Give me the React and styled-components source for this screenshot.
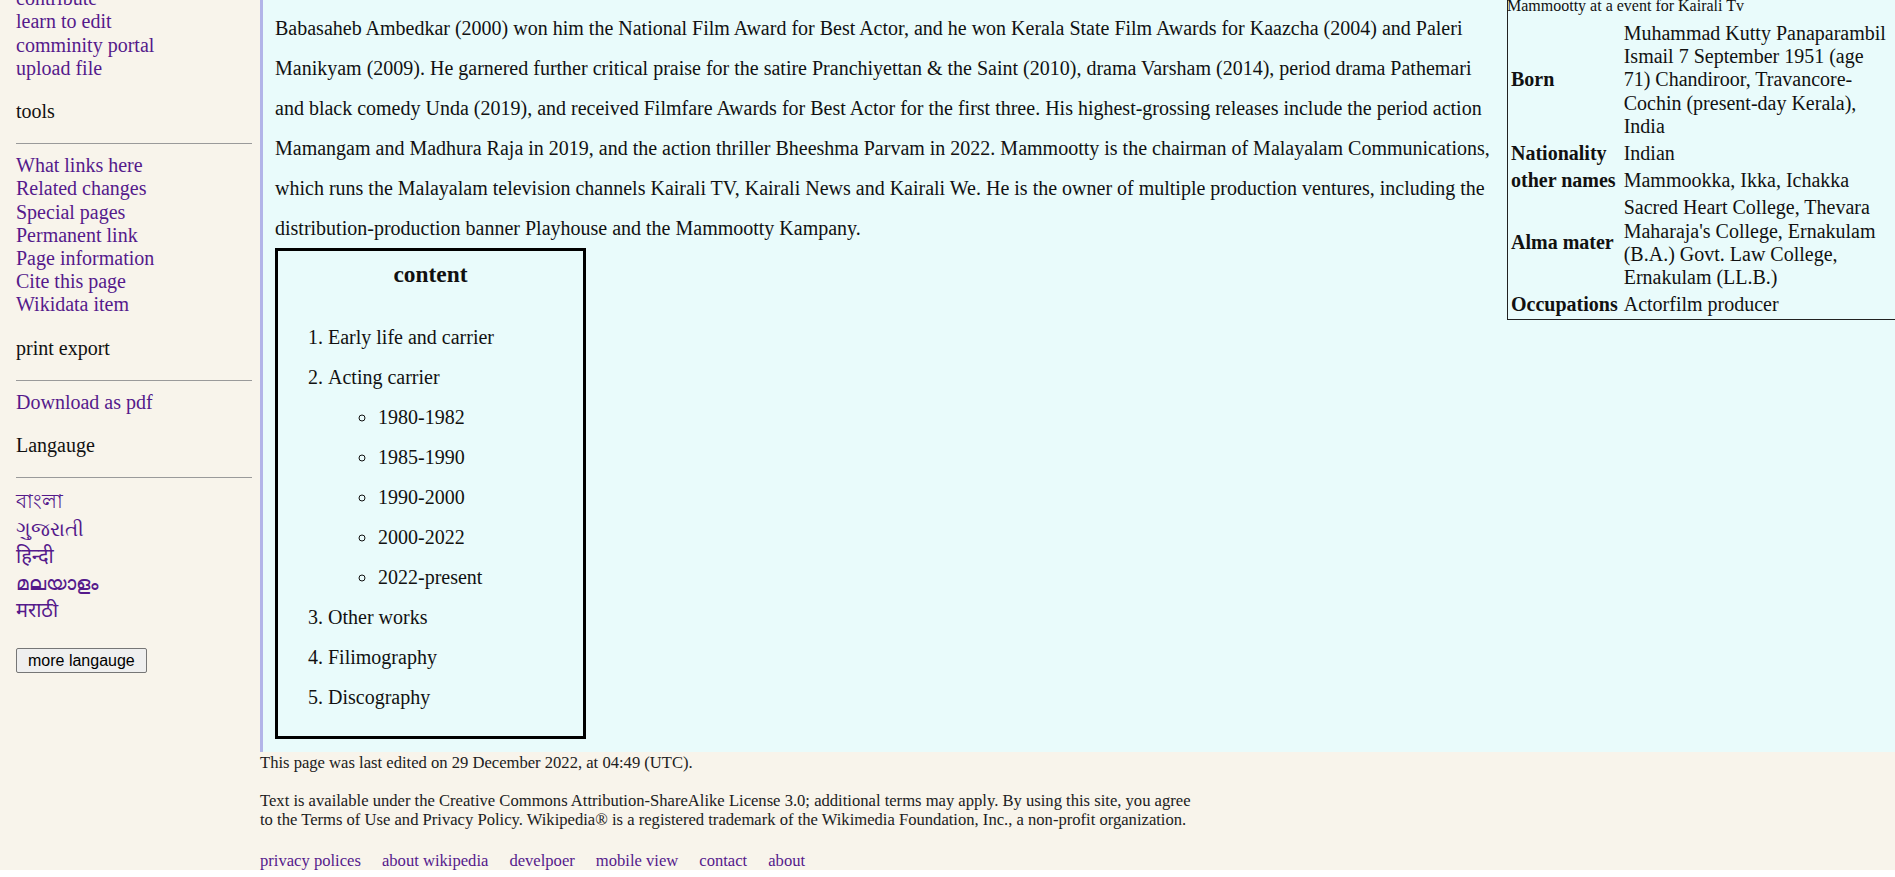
import React from 'react';
import styled, { createGlobalStyle } from 'styled-components';

const GlobalStyle = createGlobalStyle`
  html, body {
    margin: 0;
    padding: 0;
    background: #ffffff;
    overflow: hidden;
  }
  body {
    font-family: "Liberation Serif", "Times New Roman", "Noto Sans", serif;
    color: #111;
  }
`;

const navLinks = ['contribute', 'learn to edit', 'comminity portal', 'upload file'];
const toolLinks = [
  'What links here',
  'Related changes',
  'Special pages',
  'Permanent link',
  'Page information',
  'Cite this page',
  'Wikidata item',
];
const languages = ['বাংলা', 'ગુજરાતી', 'हिन्दी', 'മലയാളം', 'मराठी'];
const footerLinks = ['privacy polices', 'about wikipedia', 'develpoer', 'mobile view', 'contact', 'about'];

const App = () => {
  return (
    <>
      <GlobalStyle />
      <Page>
        <Sidebar>
          <SideList $offset="-12.8px">
            {navLinks.map((l) => (
              <li key={l}>
                <SideLink href="#">{l}</SideLink>
              </li>
            ))}
          </SideList>

          <SideHeading>tools</SideHeading>
          <Rule />
          <SideList>
            {toolLinks.map((l) => (
              <li key={l}>
                <SideLink href="#">{l}</SideLink>
              </li>
            ))}
          </SideList>

          <SideHeading>print export</SideHeading>
          <Rule />
          <SideList>
            <li>
              <SideLink href="#">Download as pdf</SideLink>
            </li>
          </SideList>

          <SideHeading>Langauge</SideHeading>
          <Rule />
          <SideList>
            {languages.map((l) => (
              <li key={l}>
                <SideLink href="#" $lang>
                  {l}
                </SideLink>
              </li>
            ))}
          </SideList>

          <MoreButton type="button">more langauge</MoreButton>
        </Sidebar>

        <Main>
          <Infobox>
            <tbody>
              <tr>
                <Caption colSpan={2}>Mammootty at a event for Kairali Tv</Caption>
              </tr>
              <tr>
                <InfoLabel>Born</InfoLabel>
                <InfoValue>
                  Muhammad Kutty Panaparambil Ismail 7 September 1951 (age 71) Chandiroor,
                  Travancore-Cochin (present-day Kerala), India
                </InfoValue>
              </tr>
              <tr>
                <InfoLabel>Nationality</InfoLabel>
                <InfoValue>Indian</InfoValue>
              </tr>
              <tr>
                <InfoLabel>other names</InfoLabel>
                <InfoValue>Mammookka, Ikka, Ichakka</InfoValue>
              </tr>
              <tr>
                <InfoLabel>Alma mater</InfoLabel>
                <InfoValue>
                  Sacred Heart College, Thevara Maharaja's College, Ernakulam (B.A.) Govt. Law
                  College, Ernakulam (LL.B.)
                </InfoValue>
              </tr>
              <tr>
                <InfoLabel>Occupations</InfoLabel>
                <InfoValue>Actorfilm producer</InfoValue>
              </tr>
            </tbody>
          </Infobox>

          <Paragraph>
            Babasaheb Ambedkar (2000) won him the National Film Award for Best Actor, and he won
            Kerala State Film Awards for Kaazcha (2004) and Paleri Manikyam (2009). He garnered
            further critical praise for the satire Pranchiyettan &amp; the Saint (2010), drama
            Varsham (2014), period drama Pathemari and black comedy Unda (2019), and received
            Filmfare Awards for Best Actor for the first three. His highest-grossing releases
            include the period action Mamangam and Madhura Raja in 2019, and the action thriller
            Bheeshma Parvam in 2022. Mammootty is the chairman of Malayalam Communications, which
            runs the Malayalam television channels Kairali TV, Kairali News and Kairali We. He is
            the owner of multiple production ventures, including the distribution-production
            banner Playhouse and the Mammootty Kampany.
          </Paragraph>

          <TocBox>
            <TocTitle>content</TocTitle>
            <TocList>
              <li>Early life and carrier</li>
              <li>
                Acting carrier
                <SubList>
                  <li>1980-1982</li>
                  <li>1985-1990</li>
                  <li>1990-2000</li>
                  <li>2000-2022</li>
                  <li>2022-present</li>
                </SubList>
              </li>
              <li>Other works</li>
              <li>Filimography</li>
              <li>Discography</li>
            </TocList>
          </TocBox>
        </Main>

        <Footer>
          <FooterText>This page was last edited on 29 December 2022, at 04:49 (UTC).</FooterText>
          <FooterText $gap="18px">
            Text is available under the Creative Commons Attribution-ShareAlike License 3.0;
            additional terms may apply. By using this site, you agree
            <br />
            to the Terms of Use and Privacy Policy. Wikipedia® is a registered trademark of the
            Wikimedia Foundation, Inc., a non-profit organization.
          </FooterText>
          <FooterLinks>
            {footerLinks.map((l) => (
              <FooterLink key={l} href="#">
                {l}
              </FooterLink>
            ))}
          </FooterLinks>
        </Footer>
      </Page>
    </>
  );
};

const Page = styled.div`
  display: grid;
  grid-template-columns: 260px 1fr;
  grid-template-rows: auto 1fr;
  height: 870px;
  background: #f8f4eb;
  overflow: hidden;
`;

const Sidebar = styled.aside`
  grid-column: 1;
  grid-row: 1 / span 2;
  padding: 0 8px 0 16px;
  font-size: 20px;
`;

const SideList = styled.ul`
  list-style: none;
  margin: ${(p) => p.$offset || '0'} 0 0;
  padding: 0;
`;

const SideLink = styled.a`
  display: block;
  color: #551a8b;
  text-decoration: none;
  font-size: 20px;
  line-height: ${(p) => (p.$lang ? '27.3px' : '23.2px')};
  font-weight: normal;
  white-space: nowrap;
`;

const SideHeading = styled.div`
  margin-top: 20px;
  font-size: 20px;
  line-height: 23.2px;
  color: #111;
`;

const Rule = styled.hr`
  border: 0;
  border-top: 1px solid #9a9a9a;
  margin: 20px 0 10px;
`;

const MoreButton = styled.button`
  margin-top: 23px;
  font-family: "Liberation Sans", Arial, sans-serif;
  font-size: 16px;
  line-height: 19px;
  padding: 2px 11px;
  color: #000;
  background: #efefef;
  border: 1px solid #767676;
  border-radius: 2px;
  cursor: pointer;
`;

const Main = styled.main`
  grid-column: 2;
  grid-row: 1;
  background: #e9fbfb;
  border-left: 3px solid #b2b4e8;
  padding: 8px 0 14px 12px;
  overflow: hidden;
  font-size: 20px;
  color: #111;
`;

const Paragraph = styled.p`
  margin: 0;
  line-height: 40px;
`;

const Infobox = styled.table`
  float: right;
  width: 390px;
  margin: -14px -2px 0 10px;
  border: 1px solid #222;
  border-spacing: 2px;
  font-size: 20px;
  line-height: 23.2px;
`;

const Caption = styled.td`
  padding: 0 0 4px;
  font-size: 16px;
  line-height: 18px;
  text-indent: -3px;
`;

const InfoLabel = styled.th`
  text-align: left;
  white-space: nowrap;
  padding: 1px 3px 1px 1px;
  font-weight: bold;
`;

const InfoValue = styled.td`
  padding: 1px;
`;

const TocBox = styled.nav`
  box-sizing: border-box;
  width: 311px;
  border: 3px solid #000;
  padding: 10px;
`;

const TocTitle = styled.h3`
  margin: 0 0 29px;
  text-align: center;
  font-size: 23.4px;
  line-height: 27px;
  font-weight: bold;
`;

const TocList = styled.ol`
  margin: 0 0 9px;
  padding-left: 40px;
  line-height: 40px;
`;

const SubList = styled.ul`
  list-style: circle;
  margin: 0;
  padding-left: 50px;
`;

const Footer = styled.footer`
  grid-column: 2;
  grid-row: 2;
  padding-top: 1px;
  font-size: 16.6px;
  line-height: 19.5px;
  color: #202020;
`;

const FooterText = styled.p`
  margin: ${(p) => p.$gap || '0'} 0 0;
`;

const FooterLinks = styled.div`
  display: flex;
  gap: 21px;
  margin-top: 21px;
`;

const FooterLink = styled.a`
  color: #551a8b;
  text-decoration: none;
`;

export default App;
